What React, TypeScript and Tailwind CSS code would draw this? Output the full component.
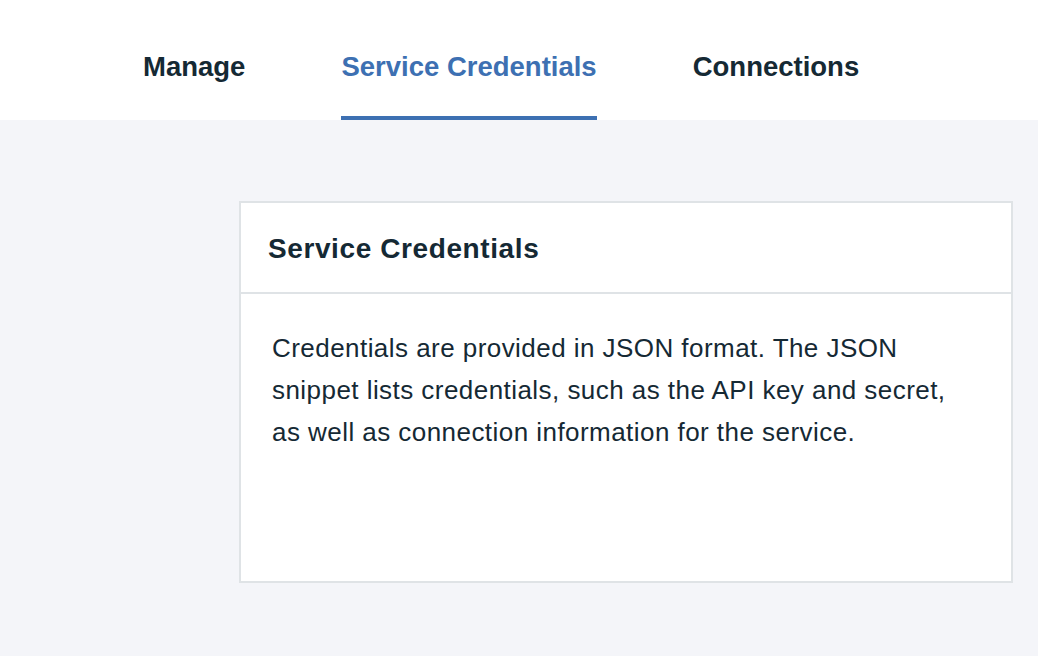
import React from "react";

const tabs = ["Manage", "Service Credentials", "Connections"];

export default function App() {
  const active = "Service Credentials";

  return (
    <div
      className="w-[1038px] h-[656px] overflow-hidden bg-[#f4f5f9] text-[#152934]"
      style={{ fontFamily: '"Liberation Sans", Arial, sans-serif' }}
    >
      {/* Tab bar */}
      <div className="bg-white h-[120px] pl-[143px] flex items-end gap-[96px]">
        {tabs.map((t) => (
          <div
            key={t}
            className={
              "h-full flex flex-col justify-end text-[27.5px] font-bold leading-none " +
              (t === active ? "text-[#3d70b2]" : "text-[#152934]")
            }
          >
            <span className="pb-[36px]">{t}</span>
            <div className={"h-[4px] " + (t === active ? "bg-[#3d70b2]" : "bg-transparent")} />
          </div>
        ))}
      </div>

      {/* Card */}
      <div className="pl-[239px] pr-[25px] pt-[81px]">
        <div className="bg-white border-2 border-[#dfe3e6] h-[382px]">
          <div className="h-[91px] border-b-2 border-[#dfe3e6] pl-[27px] flex items-center">
            <h2 className="text-[28px] font-bold leading-none tracking-[0.6px] pt-[3px]">Service Credentials</h2>
          </div>
          <p className="pl-[31px] pt-[33px] text-[26px] leading-[42px] tracking-[0.45px] max-w-[740px]">
            Credentials are provided in JSON format. The JSON snippet lists credentials, such as the
            API key and secret, as well as connection information for the service.
          </p>
        </div>
      </div>
    </div>
  );
}
